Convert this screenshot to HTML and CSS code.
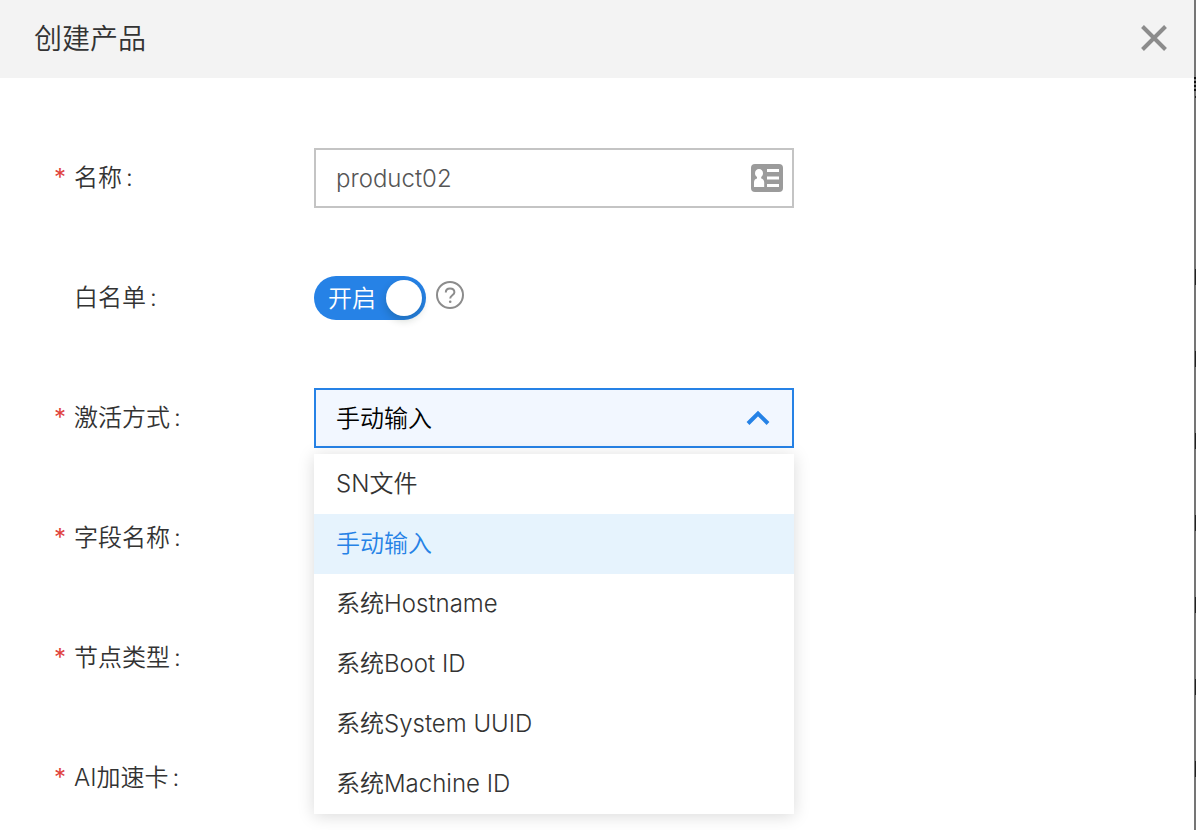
FILE: index.html
```html
<!DOCTYPE html>
<html lang="zh-CN">
<head>
    <meta charset="utf-8">
    <title>创建产品</title>
    <link rel="stylesheet" href="styles.css">
</head>
<body>
    <div class="drawer">
        <header class="drawer-header">
            <h1 class="drawer-title">创建产品</h1>
            <button class="close" type="button" aria-label="关闭">
                <svg width="28" height="28" viewBox="0 0 28 28"><path d="M2.500 2.500L25.500 25.500M25.500 2.500L2.500 25.500"/></svg>
            </button>
        </header>

        <form class="form">
            <div class="row">
                <label class="label required" for="name">名称</label>
                <div class="field">
                    <input class="control" id="name" type="text" value="product02">
                    <!-- 联系人卡片图标 -->
                    <svg class="card-icon" width="32" height="28" viewBox="0 0 32 28">
                        <rect width="32" height="28" rx="4" fill="#9b9b9b"/>
                        <path fill="#fff" d="M8 5c2.400 0 4 1.800 4 4.200 0 1.600-.8 3-1.800 3.800v1.500c2 .5 3 1.800 3 4V23H3v-4.500c0-2.200 1-3.500 3-4V13C4.800 12.200 4 10.800 4 9.200 4 6.800 5.600 5 8 5z"/>
                        <path stroke="#fff" stroke-width="3" d="M16 6.500h12M16 14h12M16 21.500h12"/>
                    </svg>
                </div>
            </div>

            <div class="row">
                <label class="label" for="whitelist">白名单</label>
                <div class="field">
                    <label class="switch">
                        <input id="whitelist" type="checkbox" role="switch" checked>
                        <span class="switch-text">开启</span>
                        <span class="switch-knob"></span>
                    </label>
                    <button class="help" type="button" aria-label="帮助">
                        <svg width="28" height="28" viewBox="0 0 28 28"><circle cx="14" cy="14" r="13" stroke-width="2"/><path stroke-width="2" d="M9.800 11.500C9.800 9 11.500 7.500 14 7.500s4.400 1.500 4.400 3.700c0 3-4.200 3.100-4.200 6.300"/><circle class="dot" cx="14.200" cy="20.800" r="1.300"/></svg>
                    </button>
                </div>
            </div>

            <div class="row">
                <label class="label required" for="active">激活方式</label>
                <div class="field">
                    <select class="control open" id="active">
                        <option>手动输入</option>
                    </select>
                    <svg class="arrow" width="24" height="16" viewBox="0 0 24 16"><path d="M2 13.500L12 3.500L22 13.500"/></svg>
                    <ul class="menu" role="listbox" aria-label="激活方式">
                        <li class="option" role="option">SN文件</li>
                        <li class="option selected" role="option" aria-selected="true">手动输入</li>
                        <li class="option" role="option">系统Hostname</li>
                        <li class="option" role="option">系统Boot ID</li>
                        <li class="option" role="option">系统System UUID</li>
                        <li class="option" role="option">系统Machine ID</li>
                    </ul>
                </div>
            </div>

            <div class="row">
                <label class="label required" for="field">字段名称</label>
                <div class="field"><input class="control" id="field" type="text"></div>
            </div>

            <div class="row">
                <label class="label required" for="node">节点类型</label>
                <div class="field"><select class="control" id="node"></select></div>
            </div>

            <div class="row">
                <label class="label required" for="card">AI加速卡</label>
                <div class="field"><select class="control" id="card"></select></div>
            </div>
        </form>
    </div>
</body>
</html>
```

FILE: styles.css
```css
*{
    box-sizing:border-box;
}
/* 抽屉右侧露出的遮罩，带列表边缘 */
body{
    margin:0;
    background-color:#757575;
    background-image:
        repeating-linear-gradient(#111 0 2px,transparent 2px 4px),
        linear-gradient(#222,#222),
        repeating-linear-gradient(transparent 0 23px,#222 23px 39px,transparent 39px 82px);
    background-repeat:no-repeat;
    background-position:right 77px,right 96px,right 246px;
    background-size:2px 16px,1px 2px,1px 584px;
    color:#333;
    font-family:Inter,"Noto Sans CJK SC",sans-serif;
    font-size:24px;
    font-weight:350;
}
button{
    padding:0;
    border:0;
    background:none;
    cursor:pointer;
}
svg{
    display:block;
    fill:none;
}
.drawer{
    min-height:100vh;
    margin-right:2px;
    background:#fff;
}
.drawer-header{
    display:flex;
    align-items:center;
    justify-content:space-between;
    height:78px;
    padding:0 26px 2px 34px;
    background:#f3f3f3;
}
.drawer-title{
    margin:0;
    padding-bottom:2px;
    font-size:28px;
    font-weight:350;
}
.close svg{
    stroke:#8c8c8c;
    stroke-width:4;
}
.form{
    display:flex;
    flex-direction:column;
    gap:60px;
    padding:70px 54px 20px;
}
.row{
    display:flex;
    align-items:center;
    height:60px;
}
.label{
    width:260px;
    padding:0 0 6px 20px;
}
.label.required{
    padding-left:0;
}
.label.required::before{
    content:"*";
    display:inline-block;
    width:20px;
    color:#e0433d;
    font-weight:400;
}
.label::after{
    content:":";
    margin-left:4px;
}
.field{
    position:relative;
    display:flex;
    align-items:center;
    flex:0 1 480px;
}
.control{
    width:100%;
    height:60px;
    padding:0 20px;
    border:2px solid #c4c4c4;
    border-radius:0;
    background:#fff;
    color:#555;
    font:inherit;
    appearance:none;
    outline:none;
}
.control.open{
    border-color:#2682e6;
    background:#f2f7ff;
    color:#000;
}
.card-icon{
    position:absolute;
    right:11px;
}
.arrow{
    position:absolute;
    right:24px;
    stroke:#2682e6;
    stroke-width:4;
}
.switch{
    display:flex;
    align-items:center;
    justify-content:space-between;
    width:112px;
    height:44px;
    padding:0 4px 0 14px;
    border-radius:22px;
    background:#2682e6;
    color:#fff;
    cursor:pointer;
}
.switch input{
    position:absolute;
    opacity:0;
}
.switch-text{
    padding-bottom:4px;
}
.switch-knob{
    width:36px;
    height:36px;
    border-radius:50%;
    background:#fff;
    box-shadow:0 4px 8px rgba(0,35,11,.2);
}
.help{
    margin:0 0 6px 10px;
}
.help svg{
    stroke:#8c8c8c;
}
.help .dot{
    fill:#8c8c8c;
    stroke:none;
}
.menu{
    position:absolute;
    top:66px;
    left:0;
    z-index:1;
    width:100%;
    margin:0;
    padding:0;
    background:#fff;
    box-shadow:0 2px 16px rgba(0,0,0,.15);
    list-style:none;
}
.option{
    height:60px;
    padding:0 22px;
    line-height:60px;
}
.option.selected{
    background:#e6f3fd;
    color:#2682e6;
}
```
